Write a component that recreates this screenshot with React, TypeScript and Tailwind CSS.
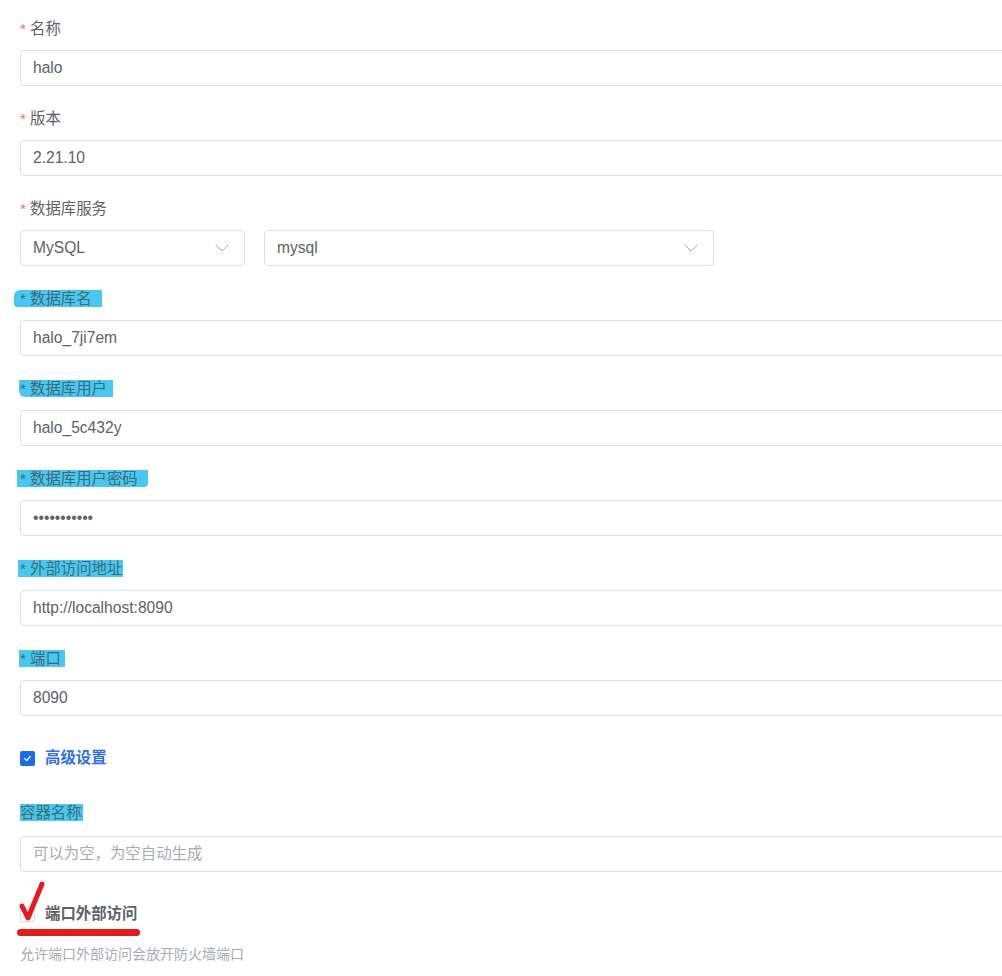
import React from 'react'
import { ChevronDown } from 'lucide-react'

interface FieldProps {
   label: string
   required?: boolean
   mark?: string
   gap?: string
   children: React.ReactNode
}

/** 表单项：标签 + 输入区域 */
function Field({ label, required = false, mark, gap = 'mt-[11px]', children }: FieldProps) {
   return (
      <div className="mb-[21px]">
         <div className="flex h-[22px] items-center pt-[1px]">
            {mark ? (
               <span className={`inline-block h-[17px] bg-[#48c8f0] leading-[17px] text-[#3d6b76] ${mark}`}>
                  {required && <span className="mr-[4px]">*</span>}
                  {label}
               </span>
            ) : (
               <span className="leading-[17px]">
                  {required && <span className="mr-[4px] text-[#f56c6c]">*</span>}
                  {label}
               </span>
            )}
         </div>
         <div className={gap}>{children}</div>
      </div>
   )
}

function TextBox({ value, placeholder }: { value?: string; placeholder?: string }) {
   return (
      <div className="flex h-[36px] w-[1040px] items-center rounded-[4px] border border-[#dcdfe6] bg-white px-[12px]">
         {value ? (
            <span className="text-[15.6px] text-[#606266]">{value}</span>
         ) : (
            <span className="text-[#a8abb2]">{placeholder}</span>
         )}
      </div>
   )
}

function SelectBox({ value, width }: { value: string; width: string }) {
   return (
      <div
         className={`flex h-[36px] ${width} items-center justify-between rounded-[4px] border border-[#dcdfe6] bg-white pl-[12px] pr-[10px]`}
      >
         <span className="text-[15.6px]">{value}</span>
         <ChevronDown size={24} strokeWidth={1} className="text-[#a8abb2]" />
      </div>
   )
}

export default function App() {
   return (
      <div className="h-[976px] w-[1002px] overflow-hidden bg-white pl-[20px] pt-[17px] font-['Liberation_Sans','Noto_Sans_CJK_SC',sans-serif] text-[15.4px] text-[#606266]">
         <Field label="名称" required>
            <TextBox value="halo" />
         </Field>
         <Field label="版本" required>
            <TextBox value="2.21.10" />
         </Field>
         <Field label="数据库服务" required>
            <div className="flex gap-[19px]">
               <SelectBox value="MySQL" width="w-[225px]" />
               <SelectBox value="mysql" width="w-[450px]" />
            </div>
         </Field>
         <Field label="数据库名" required mark="-ml-[6px] pl-[6px] pr-[10px] rounded-tl-[6px] rounded-bl-[3px]">
            <TextBox value="halo_7ji7em" />
         </Field>
         <Field label="数据库用户" required mark="-ml-[1px] pl-[1px] pr-[6px] rounded-bl-[6px]">
            <TextBox value="halo_5c432y" />
         </Field>
         <Field label="数据库用户密码" required mark="-ml-[3px] pl-[3px] pr-[10px] rounded-br-[4px]">
            <TextBox value="•••••••••••" />
         </Field>
         <Field label="外部访问地址" required mark="-ml-[2px] pl-[2px] pr-[1px]">
            <TextBox value="http://localhost:8090" />
         </Field>
         <Field label="端口" required mark="-ml-[1px] pl-[1px] pr-[4px]">
            <TextBox value="8090" />
         </Field>

         {/* 高级设置 */}
         <div className="mb-[22px] flex h-[42px] items-center">
            <span className="flex h-[15px] w-[15px] items-center justify-center rounded-[2px] bg-[#1a6ce8]">
               <svg width="9" height="9" viewBox="0 0 10 10" fill="none">
                  <path d="M2 5.2 L4.2 7.3 L8 2.8" stroke="white" strokeWidth="1.4" strokeLinecap="round" strokeLinejoin="round" />
               </svg>
            </span>
            <span className="ml-[10px] font-bold text-[#2f70e4]">高级设置</span>
         </div>

         <Field label="容器名称" mark="pr-[1px]" gap="mt-[13px]">
            <TextBox placeholder="可以为空，为空自动生成" />
         </Field>

         {/* 端口外部访问 */}
         <div className="relative flex h-[42px] items-center">
            <span className="h-[15px] w-[15px] rounded-[2px] border border-[#dcdfe6] bg-white" />
            <span className="ml-[10px] font-bold">端口外部访问</span>
            <svg className="absolute left-[-2px] top-[-13px]" width="30" height="44" viewBox="0 0 30 44" fill="none">
               <path d="M4 26 L10 38 L24 4" stroke="#e31b23" strokeWidth="5" strokeLinecap="round" strokeLinejoin="round" />
            </svg>
            <span className="absolute left-[-3px] top-[36px] h-[7px] w-[123px] rounded-full bg-[#e21b1b]" />
         </div>
         <div className="mt-[8px] h-[22px] text-[14px] leading-[22px] text-[#a8abb2]">允许端口外部访问会放开防火墙端口</div>
      </div>
   )
}
